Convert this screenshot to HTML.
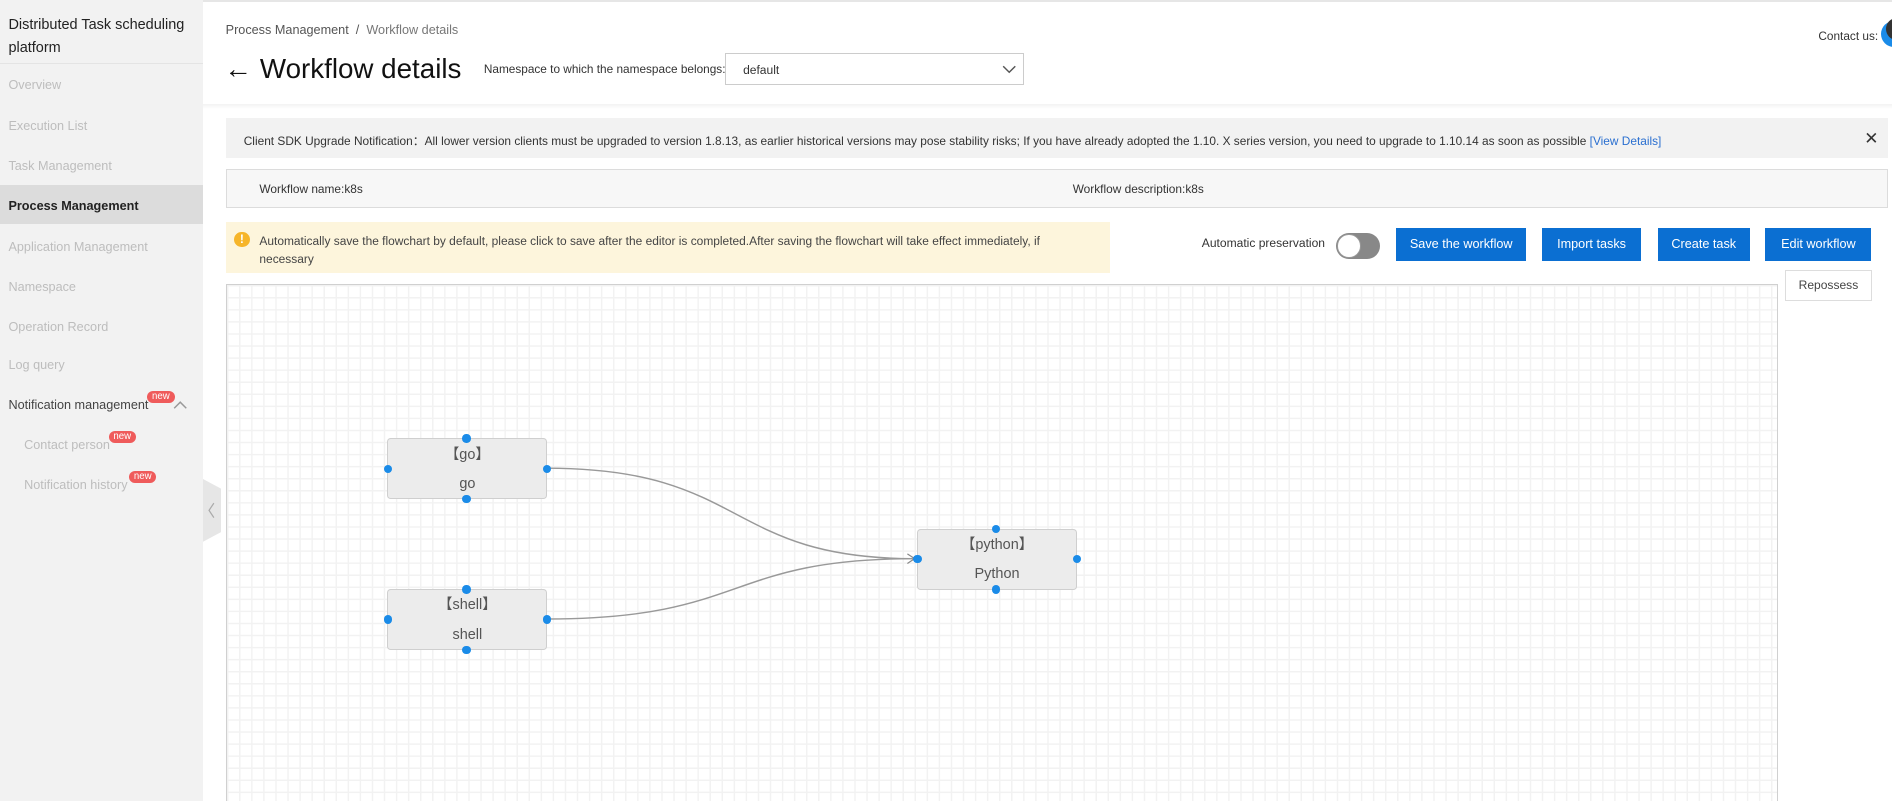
<!DOCTYPE html>
<html><head><meta charset="utf-8"><style>
html,body{margin:0;padding:0;background:#fff;overflow:hidden}
body{width:1892px;height:801px}
#r{zoom:1.20663;width:1568px;height:664px;position:relative;font-family:"Liberation Sans",sans-serif;color:#333;overflow:hidden}
.a{position:absolute;white-space:nowrap}
#sb{position:absolute;left:0;top:0;width:168px;height:664px;background:#f2f2f2}
.mi{position:absolute;left:7px;font-size:10.5px;color:#bdbdbd}
.new{position:absolute;background:#ef5b5b;color:#fff;font-size:8px;line-height:10px;padding:0 4px;border-radius:6px}
.btn{position:absolute;top:189px;height:27px;background:#0b6fd2;color:#fff;font-size:10.5px;line-height:27px;text-align:center}
.nd{position:absolute;width:131px;height:49px;background:#ececec;border:1px solid #cfcfcf;border-radius:3px;text-align:center;font-size:12px;color:#555}
.p{position:absolute;width:7px;height:7px;border-radius:50%;background:#1a8be8}
</style></head><body><div id="r">
<div class="a" style="left:0;top:0;width:1568px;height:2px;background:#e6e6e6"></div>
<div id="sb">
<div class="a" style="left:7px;top:12px;font-size:12px;line-height:19px;color:#222;white-space:normal;width:160px">Distributed Task scheduling platform</div>
<div class="a" style="left:0;top:52px;width:168px;height:1px;background:#e4e4e4"></div>
<div class="mi" style="top:65px">Overview</div>
<div class="mi" style="top:99px">Execution List</div>
<div class="mi" style="top:132px">Task Management</div>
<div class="a" style="left:0;top:153px;width:168px;height:33px;background:#dcdcdc"></div>
<div class="mi" style="top:165px;color:#222;font-weight:bold">Process Management</div>
<div class="mi" style="top:199px">Application Management</div>
<div class="mi" style="top:232px">Namespace</div>
<div class="mi" style="top:265px">Operation Record</div>
<div class="mi" style="top:297px">Log query</div>
<div class="mi" style="top:330px;color:#444">Notification management</div>
<div class="new" style="left:122px;top:324px">new</div>
<svg class="a" style="left:143px;top:332px" width="12" height="8"><path d="M1 6L6 1L11 6" stroke="#999" fill="none" stroke-width="1.2"/></svg>
<div class="mi" style="top:363px;left:20px">Contact person</div>
<div class="new" style="left:90px;top:357px">new</div>
<div class="mi" style="top:396px;left:20px">Notification history</div>
<div class="new" style="left:107px;top:390px">new</div>
</div>
<svg class="a" style="left:168px;top:397px" width="15" height="52"><path d="M0 0L15 8L15 44L0 52Z" fill="#e6e6e6"/><path d="M9 20L5 26L9 32" stroke="#aaa" fill="none"/></svg>
<div class="a" style="left:168px;top:86px;width:1400px;height:4px;background:linear-gradient(#f3f3f3,#fff)"></div>
<div class="a" style="left:187px;top:19px;font-size:10.5px;color:#555">Process Management&nbsp;&nbsp;/&nbsp;&nbsp;<span style="color:#777">Workflow details</span></div>
<div class="a" style="left:186px;top:44px;font-size:23px;color:#111">← Workflow details</div>
<div class="a" style="left:401px;top:51px;font-size:9.8px;color:#333">Namespace to which the namespace belongs:</div>
<div class="a" style="left:601px;top:44px;width:246px;height:25px;border:1px solid #ccc;background:#fff"><span class="a" style="left:14px;top:7px;font-size:10px">default</span><svg class="a" style="left:229px;top:9px" width="12" height="8"><path d="M1 1L6 6L11 1" stroke="#555" fill="none" stroke-width="1.2"/></svg></div>
<div class="a" style="left:1507px;top:24px;font-size:9.8px">Contact us:</div>
<div class="a" style="left:1559px;top:17px;width:22px;height:22px;border-radius:50%;background:#1a8be8"></div>
<div class="a" style="left:1563px;top:15px;width:18px;height:18px;border-radius:50%;background:#333"></div>
<div class="a" style="left:187px;top:98px;width:1378px;height:33px;background:#f2f2f2"></div>
<div class="a" style="left:202px;top:109px;font-size:9.85px;color:#333">Client SDK Upgrade Notification：All lower version clients must be upgraded to version 1.8.13, as earlier historical versions may pose stability risks; If you have already adopted the 1.10. X series version, you need to upgrade to 1.10.14 as soon as possible <span style="color:#2a6fd0">[View Details]</span></div>
<div class="a" style="left:1545px;top:106px;font-size:14px;color:#333">✕</div>
<div class="a" style="left:187px;top:140px;width:1376px;height:31px;border:1px solid #dcdcdc;background:#f7f7f7"></div>
<div class="a" style="left:215px;top:151px;font-size:9.85px">Workflow name:k8s</div>
<div class="a" style="left:889px;top:151px;font-size:9.85px">Workflow description:k8s</div>
<div class="a" style="left:187px;top:184px;width:733px;height:42px;background:#fdf5dc"></div>
<div class="a" style="left:194px;top:192px;width:13px;height:13px;border-radius:50%;background:#f6b52a;color:#fff;font-size:10px;line-height:13px;text-align:center;font-weight:bold">!</div>
<div class="a" style="left:215px;top:192px;font-size:9.9px;line-height:15px;white-space:normal;width:690px;color:#444">Automatically save the flowchart by default, please click to save after the editor is completed.After saving the flowchart will take effect immediately, if necessary</div>
<div class="a" style="left:996px;top:196px;font-size:10px">Automatic preservation</div>
<div class="a" style="left:1107px;top:193px;width:37px;height:22px;border-radius:11px;background:#888"><div class="a" style="left:1px;top:1px;width:18px;height:18px;border-radius:50%;background:#fff;border:1px solid #999"></div></div>
<div class="btn" style="left:1157px;width:108px">Save the workflow</div>
<div class="btn" style="left:1278px;width:82px">Import tasks</div>
<div class="btn" style="left:1374px;width:76px">Create task</div>
<div class="btn" style="left:1463px;width:88px">Edit workflow</div>
<div class="a" style="left:1479px;top:224px;width:71px;height:24px;border:1px solid #ddd;font-size:10px;line-height:24px;text-align:center;color:#444">Repossess</div>
<div class="a" style="left:187px;top:235px;width:1285px;height:440px;border:1px solid #d0d0d0;background-color:#fff;background-image:linear-gradient(#f2f2f2 1px,transparent 1px),linear-gradient(90deg,#f2f2f2 1px,transparent 1px);background-size:10px 10px"></div>
<svg class="a" style="left:0;top:0" width="1568" height="664"><path d="M453 388C620 388 600 463 758 463M453 513C620 513 600 463 758 463" stroke="#999" fill="none" stroke-width="1.2"/><path d="M752 459L758 463L752 467" stroke="#888" fill="none"/></svg>
<div class="nd" style="left:321px;top:363px"><div style="margin-top:3px">【go】</div><div style="margin-top:10px">go</div></div>
<div class="nd" style="left:321px;top:488px"><div style="margin-top:3px">【shell】</div><div style="margin-top:10px">shell</div></div>
<div class="nd" style="left:760px;top:438px"><div style="margin-top:3px">【python】</div><div style="margin-top:10px">Python</div></div>
<div class="p" style="left:383px;top:360px"></div><div class="p" style="left:383px;top:410px"></div><div class="p" style="left:318px;top:385px"></div><div class="p" style="left:450px;top:385px"></div>
<div class="p" style="left:383px;top:485px"></div><div class="p" style="left:383px;top:535px"></div><div class="p" style="left:318px;top:510px"></div><div class="p" style="left:450px;top:510px"></div>
<div class="p" style="left:822px;top:435px"></div><div class="p" style="left:822px;top:485px"></div><div class="p" style="left:757px;top:460px"></div><div class="p" style="left:889px;top:460px"></div>
</div></body></html>
